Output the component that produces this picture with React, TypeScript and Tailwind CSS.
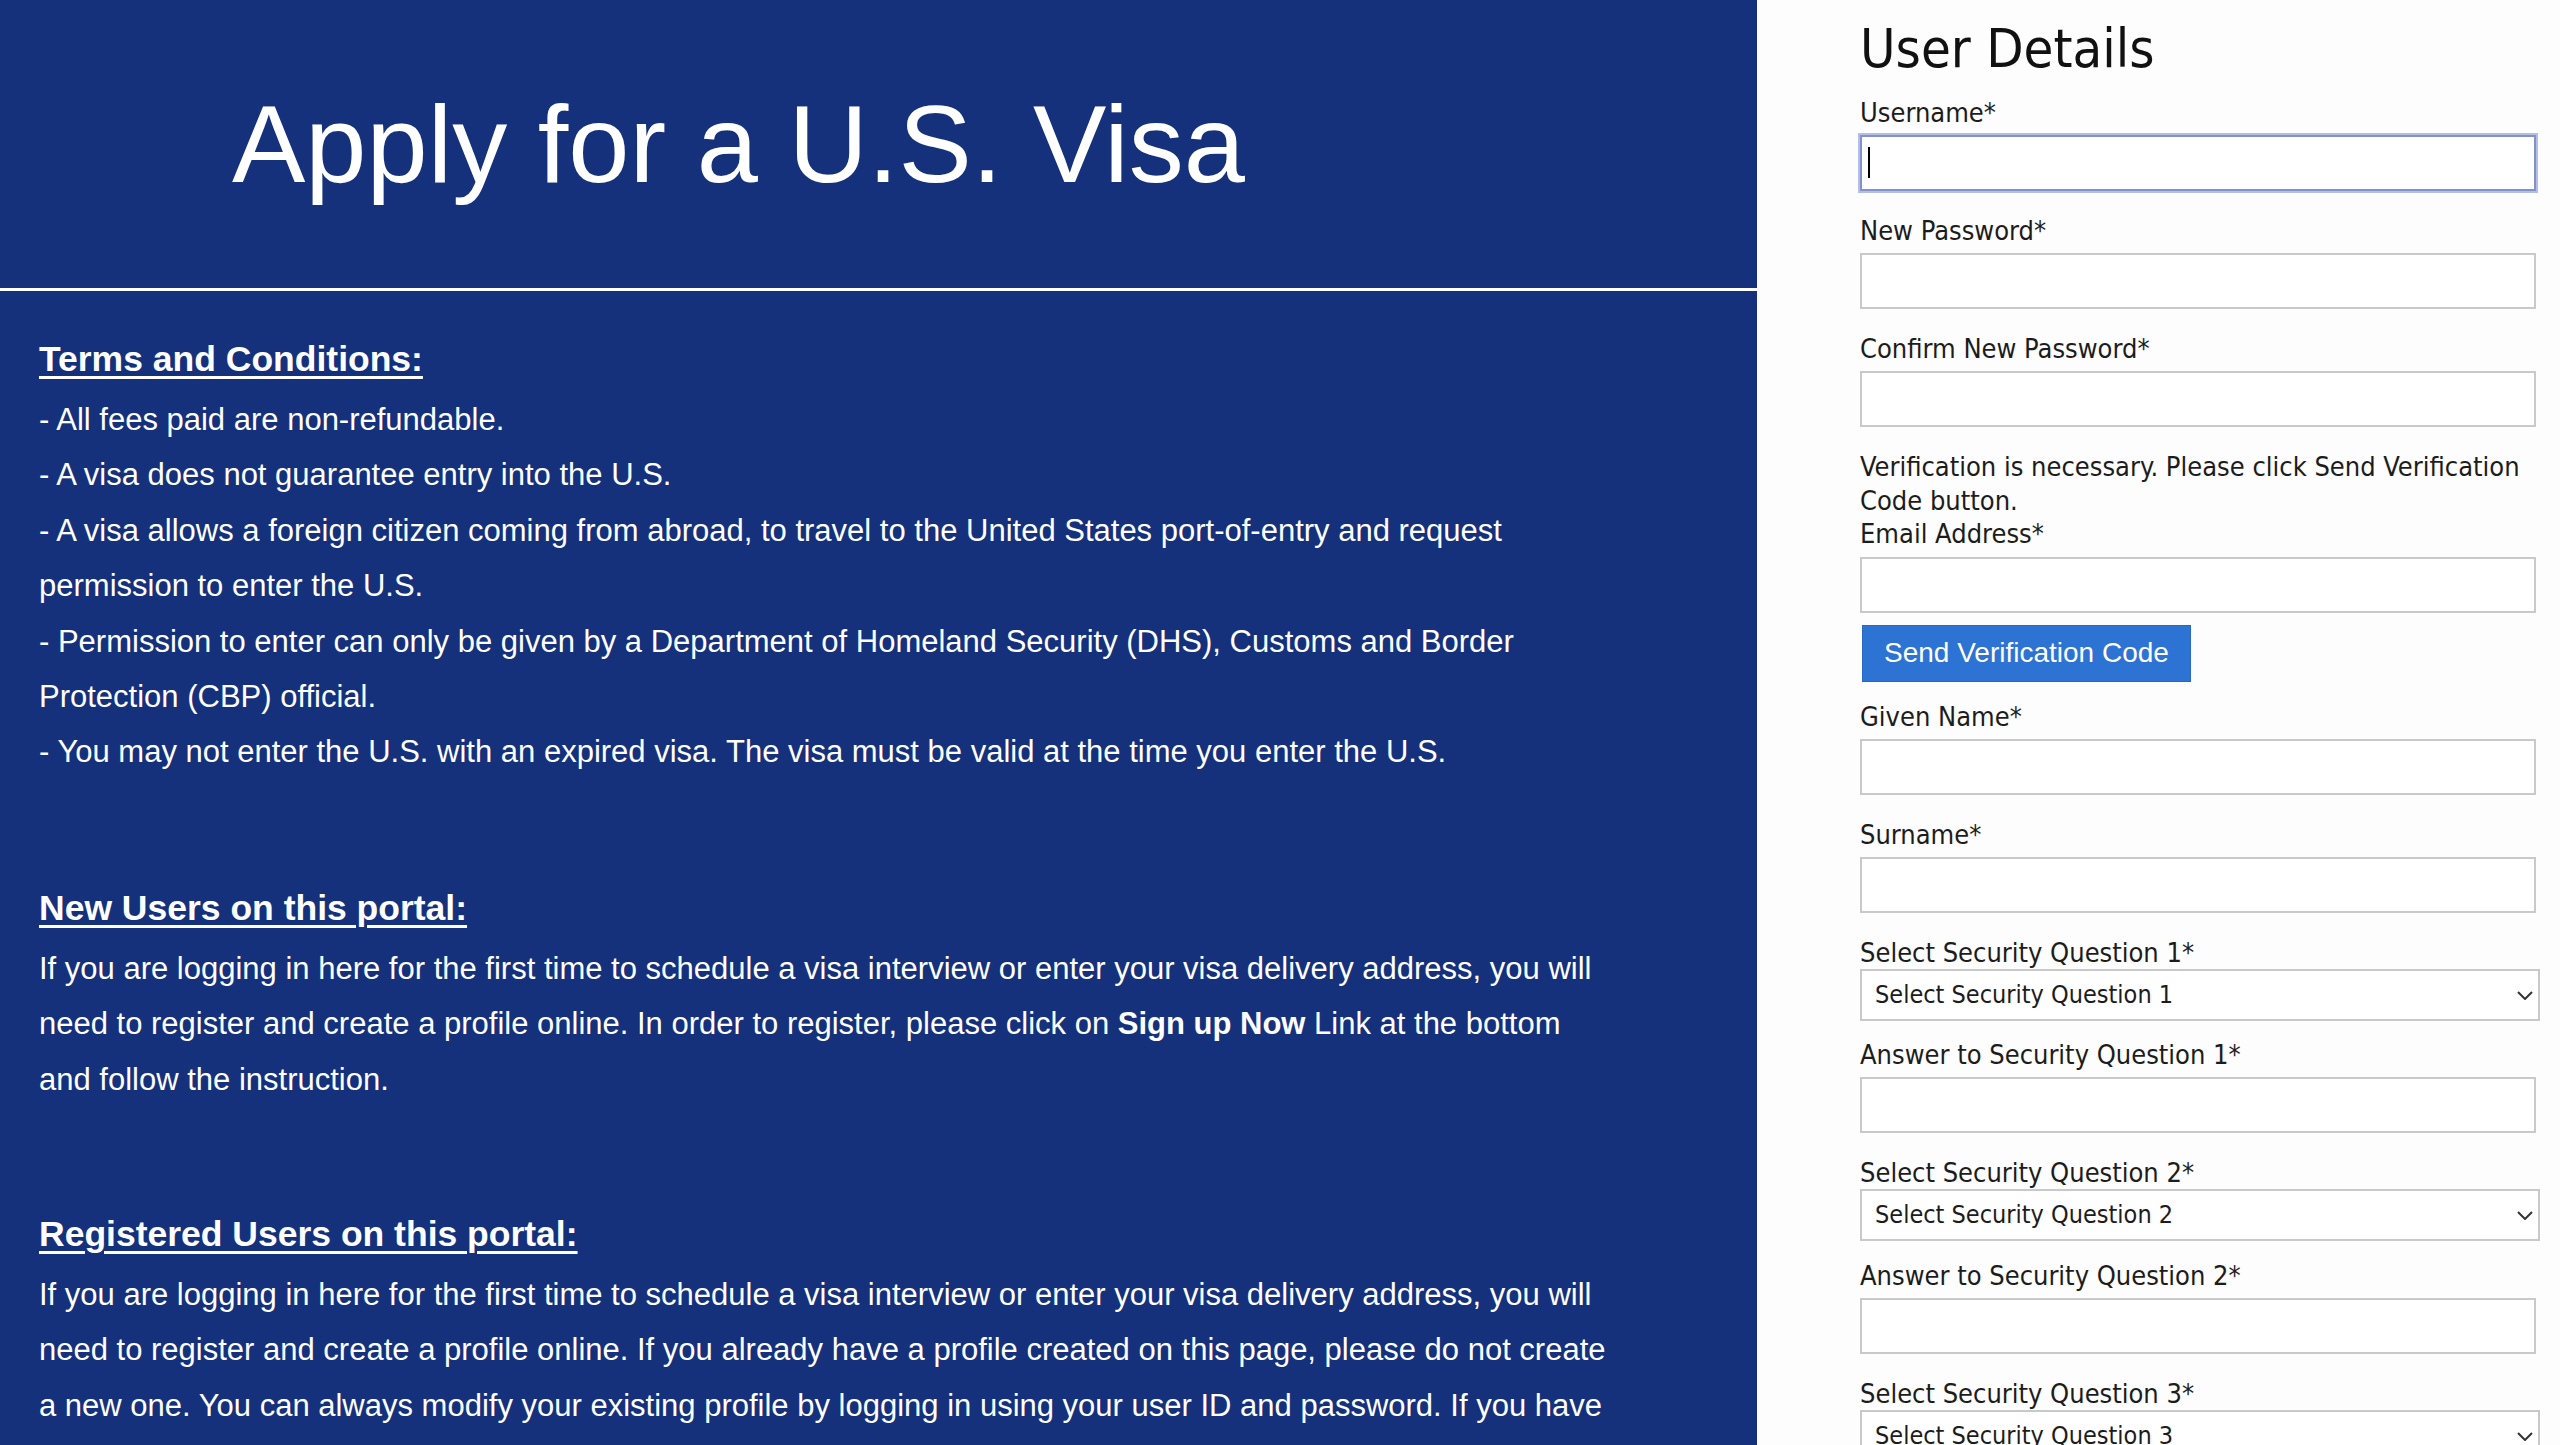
import React from 'react';

const sansLeft = "font-['Liberation_Sans',Arial,Helvetica,sans-serif]";
const sansRight = "font-['DejaVu_Sans_Condensed','DejaVu_Sans',Tahoma,sans-serif] [font-stretch:condensed]";

const terms = [
  'All fees paid are non-refundable.',
  'A visa does not guarantee entry into the U.S.',
  'A visa allows a foreign citizen coming from abroad, to travel to the United States port-of-entry and request permission to enter the U.S.',
  'Permission to enter can only be given by a Department of Homeland Security (DHS), Customs and Border Protection (CBP) official.',
  'You may not enter the U.S. with an expired visa. The visa must be valid at the time you enter the U.S.',
];

function SectionTitle({ children, className = '' }: { children: React.ReactNode; className?: string }) {
  return (
    <h2 className={`text-[35.5px] leading-[55px] font-bold underline decoration-[3px] underline-offset-[5px] mb-[5px] ${className}`}>
      {children}
    </h2>
  );
}

function Label({ children, className = '' }: { children: React.ReactNode; className?: string }) {
  return <label className={`block h-[32px] leading-[32px] text-[27px] text-[#1c1c1c] ${className}`}>{children}</label>;
}

function TextField({ label, mt, focused = false }: { label: string; mt: string; focused?: boolean }) {
  return (
    <div className={mt}>
      <Label>{label}</Label>
      <div className="relative mt-[6px] w-[676px]">
        <input
          type="text"
          className={`block w-full h-[56px] bg-white border-2 outline-none ${
            focused ? 'border-[#8391c9] ring-2 ring-[#b4bee6]' : 'border-[#c9c9c9]'
          }`}
        />
        {focused && <span className="absolute left-[8px] top-[12px] w-[2px] h-[31px] bg-black" />}
      </div>
    </div>
  );
}

function SelectField({ label, placeholder, mt }: { label: string; placeholder: string; mt: string }) {
  return (
    <div className={mt}>
      <Label>{label}</Label>
      <div className="relative w-[680px] h-[52px]">
        <select className="appearance-none block w-full h-full bg-white border-2 border-[#c9c9c9] pl-[13px] text-[25px] text-[#1c1c1c] outline-none">
          <option>{placeholder}</option>
        </select>
        <svg className="absolute right-[7px] top-[22px] pointer-events-none" width="16" height="9" viewBox="0 0 16 9" fill="none">
          <path d="M1 1l7 7 7-7" stroke="#333" strokeWidth="2" />
        </svg>
      </div>
    </div>
  );
}

export default function App() {
  return (
    <div className="flex w-[2560px] h-[1445px] overflow-hidden bg-[#fdfdfd]">
      {/* left: info */}
      <div className={`w-[1757px] shrink-0 bg-[#15317c] text-white ${sansLeft}`}>
        <div className="h-[288px] pt-[89px] pl-[232px]">
          <h1 className="text-[110px] leading-none font-normal">Apply for a U.S. Visa</h1>
        </div>
        <div className="h-[3px] bg-white" />

        <div className="pt-[41px] pl-[39px] w-[1610px] text-[31px] leading-[55.4px]">
          <SectionTitle>Terms and Conditions:</SectionTitle>
          {terms.map((t) => (
            <p key={t}>- {t}</p>
          ))}

          <SectionTitle className="mt-[101px]">New Users on this portal:</SectionTitle>
          <p>
            If you are logging in here for the first time to schedule a visa interview or enter your visa delivery
            address, you will need to register and create a profile online. In order to register, please click on{' '}
            <b>Sign up Now</b> Link at the bottom and follow the instruction.
          </p>

          <SectionTitle className="mt-[100px]">Registered Users on this portal:</SectionTitle>
          <p>
            If you are logging in here for the first time to schedule a visa interview or enter your visa delivery
            address, you will need to register and create a profile online. If you already have a profile created on
            this page, please do not create a new one. You can always modify your existing profile by logging in using
            your user ID and password. If you have
          </p>
        </div>
      </div>

      {/* right: form */}
      <div className={`flex-1 pl-[103px] pt-[22px] ${sansRight}`}>
        <h1 className="text-[54px] leading-[54px] text-[#111]">User Details</h1>

        <TextField label="Username*" mt="mt-[21px]" focused />
        <TextField label="New Password*" mt="mt-[24px]" />
        <TextField label="Confirm New Password*" mt="mt-[24px]" />

        <div className="mt-[23px] w-[680px] text-[27px] leading-[33.5px] text-[#1c1c1c]">
          <p>Verification is necessary. Please click Send Verification Code button.</p>
          <label className="block">Email Address*</label>
        </div>
        <input type="text" className="block mt-[6px] w-[676px] h-[56px] bg-white border-2 border-[#c9c9c9] outline-none" />
        <button
          type="button"
          className={`mt-[12px] ml-[2px] h-[57px] px-[21px] bg-[#2c73d4] border border-[#2a69c2] text-white text-[28px] ${sansLeft} [font-stretch:normal]`}
        >
          Send Verification Code
        </button>

        <TextField label="Given Name*" mt="mt-[19px]" />
        <TextField label="Surname*" mt="mt-[24px]" />
        <SelectField label="Select Security Question 1*" placeholder="Select Security Question 1" mt="mt-[24px]" />
        <TextField label="Answer to Security Question 1*" mt="mt-[18px]" />
        <SelectField label="Select Security Question 2*" placeholder="Select Security Question 2" mt="mt-[24px]" />
        <TextField label="Answer to Security Question 2*" mt="mt-[19px]" />
        <SelectField label="Select Security Question 3*" placeholder="Select Security Question 3" mt="mt-[24px]" />
      </div>
    </div>
  );
}
